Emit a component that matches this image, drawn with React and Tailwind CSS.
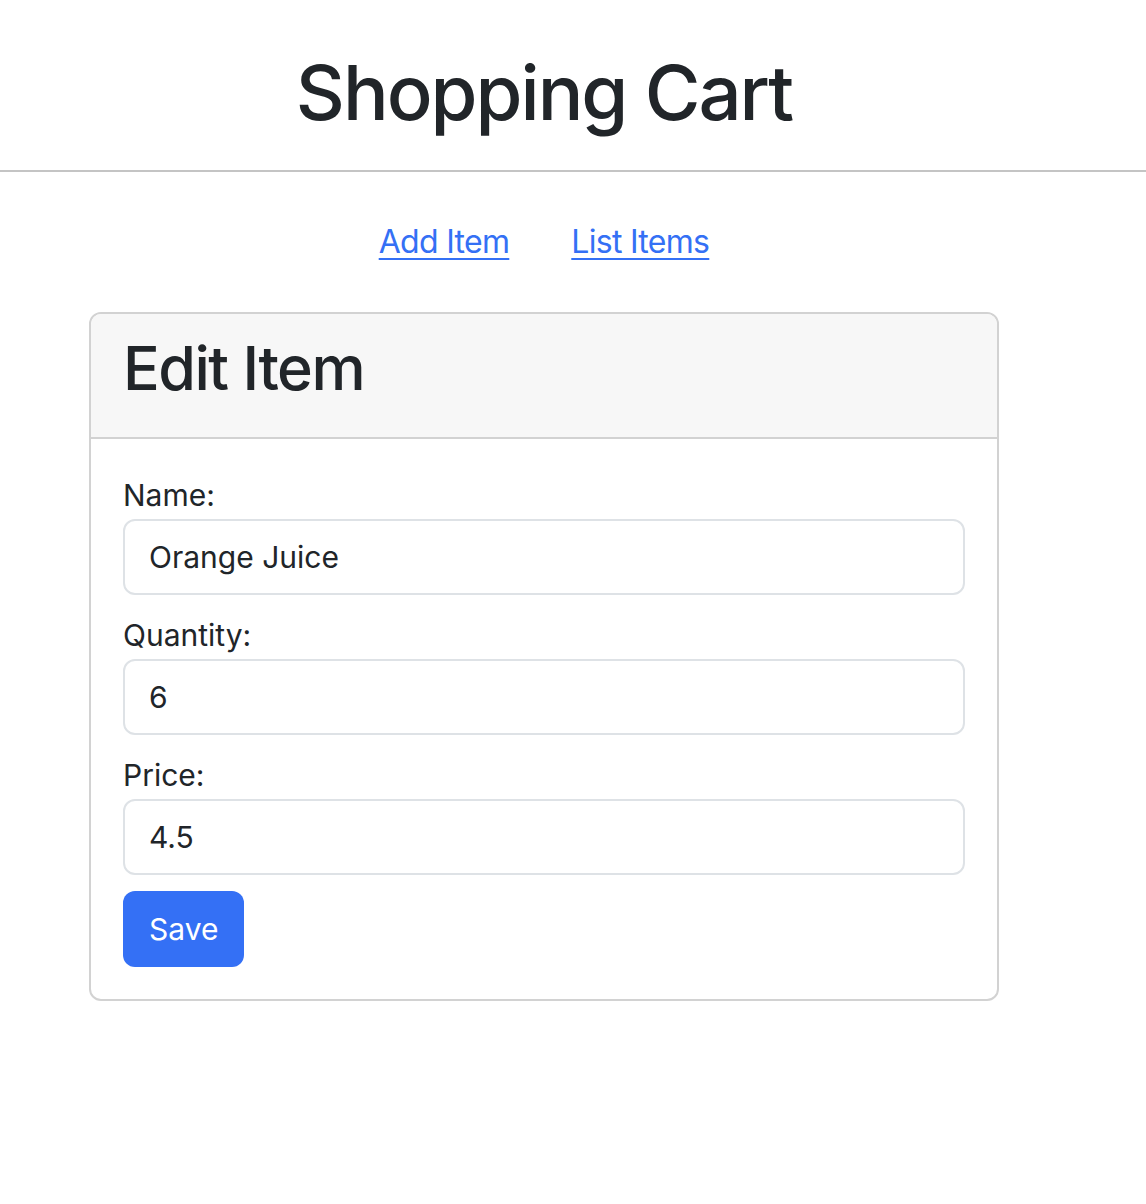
import React, { useState } from 'react';

export default function App() {
    const [name, setName] = useState('Orange Juice');
    const [quantity, setQuantity] = useState('6');
    const [price, setPrice] = useState('4.5');

    const fields = [
        { label: 'Name:', value: name, onChange: setName },
        { label: 'Quantity:', value: quantity, onChange: setQuantity },
        { label: 'Price:', value: price, onChange: setPrice },
    ];

    return (
        <div className="min-h-[1204px] bg-white text-[#212529] font-['Inter','Liberation_Sans',sans-serif]">
            {/* Header */}
            <div className="w-[1088px] pt-[44px]">
                <h1 className="text-center text-[76px] leading-[96px] font-medium tracking-[-2px]">Shopping Cart</h1>
            </div>
            <hr className="mt-[30px] border-0 h-[2px] bg-[#c4c4c4]" />

            <div className="w-[1088px]">
                {/* Nav */}
                <nav className="mt-[46px] flex justify-center gap-[62px] text-[32px] leading-[48px] tracking-[-0.7px]">
                    <a href="#" className="text-[#3470f5] underline decoration-2 underline-offset-[5px]">Add Item</a>
                    <a href="#" className="text-[#3470f5] underline decoration-2 underline-offset-[5px]">List Items</a>
                </nav>

                {/* Card */}
                <div className="mx-[89px] mt-[46px] border-2 border-[#d2d2d2] rounded-[12px] overflow-hidden">
                    <div className="bg-[#f7f7f7] border-b-2 border-[#d2d2d2] px-[32px] pt-[16px] pb-[16px]">
                        <h2 className="text-[61px] leading-[77px] font-medium mb-[14px] tracking-[-1.5px]">Edit Item</h2>
                    </div>
                    <form className="p-[32px] flex flex-col" onSubmit={(e) => e.preventDefault()}>
                        {fields.map((f, i) => (
                            <div key={i} className="mb-[16px]">
                                <label className="block text-[30px] leading-[48px]">{f.label}</label>
                                <input
                                    value={f.value}
                                    onChange={(e) => f.onChange(e.target.value)}
                                    className="block w-full h-[76px] border-2 border-[#dee2e6] rounded-[12px] px-[24px] text-[30px] text-[#212529] outline-none"
                                />
                            </div>
                        ))}
                        <div>
                            <button type="submit" className="h-[76px] px-[26px] rounded-[12px] bg-[#3470f5] text-white text-[30px]">Save</button>
                        </div>
                    </form>
                </div>
            </div>
        </div>
    );
}
